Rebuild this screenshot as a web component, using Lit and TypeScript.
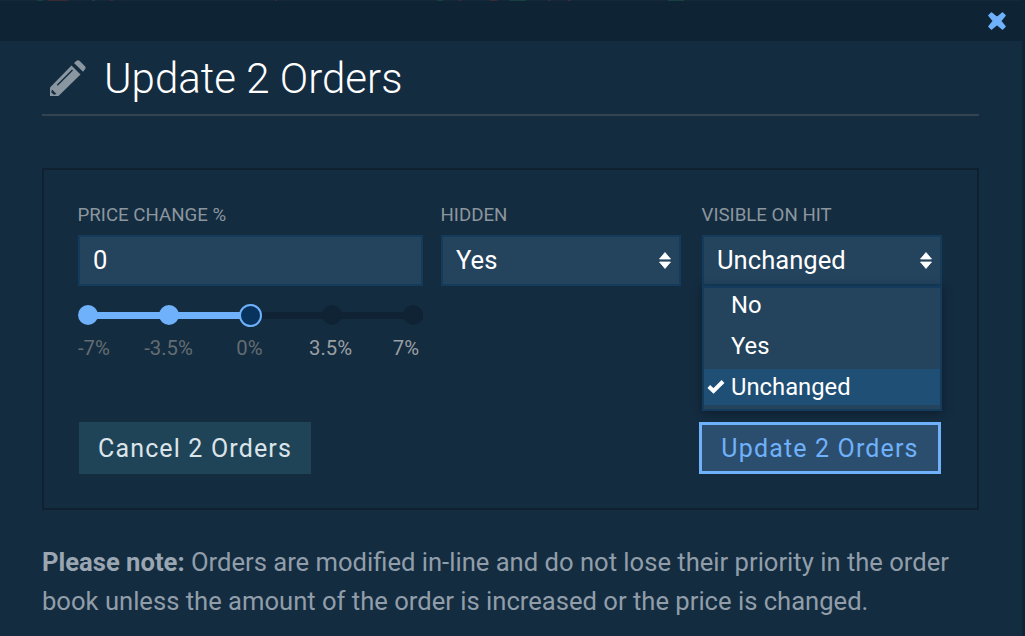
import { LitElement, html, css } from "lit";
import { customElement } from "lit/decorators.js";

const updown = html`<svg class="updown" viewBox="0 0 12 17" width="12" height="17"><path d="M6 0.500 L11.500 7 H0.500 Z M0.500 10 H11.500 L6 16.500 Z" fill="#fff" stroke="#fff" stroke-width="0.800" stroke-linejoin="round"/></svg>`;

@customElement("app-root")
export class AppRoot extends LitElement {
  static styles = css`
    :host { display: block; width: 1025px; height: 636px; overflow: hidden; background: #0f2334; font-family: Roboto, "Liberation Sans", sans-serif; }
    .modal { width: 1022px; height: 636px; display: flex; flex-direction: column; background: #142c40; }
    .ticks { height: 1px; flex: none; background-color: #14283a; background-repeat: no-repeat; background-size: 6px 1px, 20px 1px, 3px 1px, 3px 1px, 2px 1px, 6px 1px, 3px 1px, 7px 1px, 16px 1px, 3px 1px, 3px 1px, 16px 1px;
      background-position: 37px 0, 48px 0, 92px 0, 110px 0, 275px 0, 437px 0, 458px 0, 490px 0, 510px 0, 548px 0, 568px 0, 668px 0;
      background-image: linear-gradient(#17403f, #17403f), linear-gradient(#3a2a36, #3a2a36), linear-gradient(#17403f, #17403f), linear-gradient(#3a2a36, #3a2a36), linear-gradient(#3a2a36, #3a2a36), linear-gradient(#17403f, #17403f), linear-gradient(#3a2a36, #3a2a36), linear-gradient(#3a2a36, #3a2a36), linear-gradient(#17403f, #17403f), linear-gradient(#3a2a36, #3a2a36), linear-gradient(#3a2a36, #3a2a36), linear-gradient(#17403f, #17403f); }
    .topbar { height: 40px; flex: none; background: #0e2333; display: flex; justify-content: flex-end; align-items: center; padding-right: 16px; box-sizing: border-box; }
    .body { padding: 0 43px 0 42px; display: flex; flex-direction: column; }
    .heading { height: 75px; box-sizing: border-box; display: flex; align-items: center; gap: 19px; padding-left: 8px; border-bottom: 2px solid #33434f; }
    .heading h1 { margin: 0 0 0 -1px; font-size: 42px; font-weight: 300; color: #fff; line-height: 1; position: relative; top: 1px; }
    .pencil { flex: none; position: relative; top: 0.500px; }
    .panel { margin-top: 52px; height: 342px; box-sizing: border-box; border: 2px solid #0f2130; padding: 35px 35px 0 34px; display: flex; flex-direction: column; }
    .fields { display: flex; height: 217px; }
    .f1 { width: 345px; margin-right: 18px; }
    .f2 { width: 240px; margin-right: 21px; }
    .f3 { width: 240px; position: relative; }
    label { display: block; font-size: 18.700px; line-height: 20px; color: #8c969e; height: 20px; margin: 0 0 10px -0.500px; }
    .box { height: 51px; box-sizing: border-box; background: #24435d; border: 2px solid #143b5c; color: #fff; font-size: 25.600px; padding: 0 13px 2px; display: flex; align-items: center; justify-content: space-between; }
    .updown { margin: 2px -5px 0 0; flex: none; }
    .slider { margin-top: 19px; position: relative; height: 20px; }
    .track { display: flex; align-items: center; justify-content: space-between; height: 20px; width: 345px; background: linear-gradient(#0f2334, #0f2334) center / 100% 7px no-repeat; }
    .fill { position: absolute; left: 10px; top: 6.500px; height: 7px; width: 163px; background: #6fb1fa; }
    .dot { width: 20px; height: 20px; border-radius: 50%; background: #0f2334; position: relative; }
    .dot.on { background: #6fb1fa; }
    .dot.cur { background: #07335c; border: 2px solid #6fb1fa; box-sizing: border-box; width: 23px; height: 23px; margin: -1.500px; }
    .marks { display: grid; grid-template-columns: 50px 81px 81px 81px 48px; margin-top: 11px; width: 341.500px; font-size: 20.300px; line-height: 24px; color: #9a9fa3; text-align: center; }
    .marks .dim { color: #636c72; }
    .marks span:first-child { text-align: left; }
    .marks span:last-child { text-align: right; }
    .menu { position: absolute; left: 0; top: 81px; width: 240px; height: 125px; box-sizing: border-box; background: #24435d; border: 2px solid #143b5c; color: #fff; font-size: 23.800px; box-shadow: 0 2px 8px rgba(5, 15, 25, .5); }
    .opts { display: flex; flex-direction: column; gap: 5px; margin-top: -1px; }
    .opt { height: 36px; line-height: 36px; padding-left: 27px; position: relative; }
    .opt.sel { background: #1f4f75; }
    .check { position: absolute; left: 3px; top: 10px; }
    .buttons { display: flex; justify-content: space-between; align-items: center; height: 52px; padding-left: 1px; margin-right: 1px; }
    button { font: inherit; font-size: 25px; letter-spacing: 1.150px; height: 52px; box-sizing: border-box; border: none; margin: 0; padding: 0; }
    .cancel { width: 232px; background: #1f4458; color: #dce4ea; }
    .update { width: 242px; background: #2c4e6e; color: #6fb1fa; border: 3px solid #6fb1fa; }
    .note { margin: 33px 0 0; font-size: 25.600px; line-height: 39px; color: #919eaa; }
    .note b { font-weight: 700; color: #9aa6b2; }
  `;
  render() {
    return html`<div class="modal">
      <div class="ticks"></div>
      <div class="topbar">
        <svg width="18" height="18" viewBox="0 0 18 18"><path d="M3.500 1 L9 5.500 L14.500 1 L17 3.500 L12.500 9 L17 14.500 L14.500 17 L9 12.500 L3.500 17 L1 14.500 L5.500 9 L1 3.500 Z" fill="#6fb1fa" stroke="#6fb1fa" stroke-width="1.600" stroke-linejoin="round"/></svg>
      </div>
      <div class="body">
        <div class="heading">
          <svg class="pencil" width="36" height="36" viewBox="0 0 36 36">
            <path fill="#8a96a0" d="M0 36 V27.500 L21.500 5.500 L30.500 14.500 L8.500 36 Z"/>
            <path fill="#8a96a0" d="M24 3 L26.500 0.800 Q28 -0.300 29.500 0.800 L35 6.300 Q36.200 7.800 35 9.300 L33 11.800 Z"/>
            <path fill="#142c40" d="M6.800 24.800 L22 9.600 L23 10.600 L7.800 25.800 Z M2 29.500 L6.500 34 L3.800 34.800 L1.200 32.200 Z"/>
          </svg>
          <h1>Update 2 Orders</h1>
        </div>
        <div class="panel">
          <div class="fields">
            <div class="f1">
              <label>PRICE CHANGE %</label>
              <div class="box">0</div>
              <div class="slider">
                <div class="fill"></div>
                <div class="track">
                  <span class="dot on"></span><span class="dot on"></span><span class="dot cur"></span><span class="dot"></span><span class="dot"></span>
                </div>
              </div>
              <div class="marks"><span class="dim">-7%</span><span class="dim">-3.5%</span><span class="dim">0%</span><span>3.5%</span><span>7%</span></div>
            </div>
            <div class="f2">
              <label>HIDDEN</label>
              <div class="box">Yes ${updown}</div>
            </div>
            <div class="f3">
              <label>VISIBLE ON HIT</label>
              <div class="box">Unchanged ${updown}</div>
              <div class="menu">
                <div class="opts">
                  <div class="opt">No</div>
                  <div class="opt">Yes</div>
                  <div class="opt sel">
                    <svg class="check" width="18" height="15" viewBox="0 0 18 15"><path d="M1.800 7.500 L6.500 12 L16 2.500" fill="none" stroke="#fff" stroke-width="4"/></svg>
                    Unchanged
                  </div>
                </div>
              </div>
            </div>
          </div>
          <div class="buttons">
            <button class="cancel">Cancel 2 Orders</button>
            <button class="update">Update 2 Orders</button>
          </div>
        </div>
        <p class="note"><b>Please note:</b> Orders are modified in-line and do not lose their priority in the order book unless the amount of the order is increased or the price is changed.</p>
      </div>
    </div>`;
  }
}
